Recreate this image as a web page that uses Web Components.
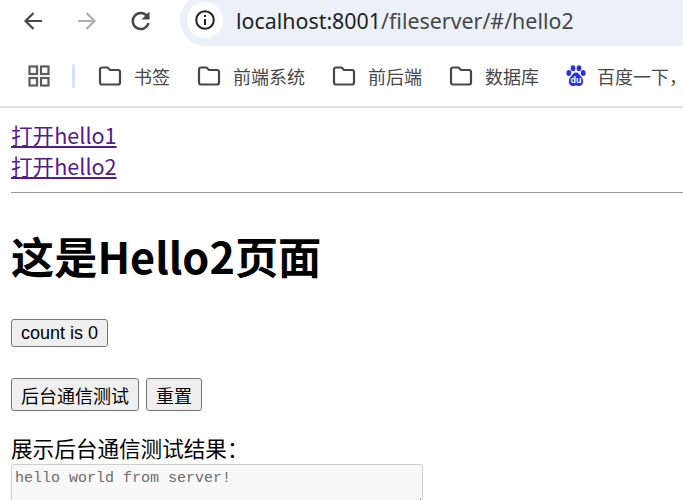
<!DOCTYPE html>
<html lang="zh">
<head>
<meta charset="utf-8">
<title>hello2</title>
<style>
  html, body { margin: 0; height: 500px; overflow: hidden; background: #fff; }
</style>
</head>
<body>
<browser-toolbar url="localhost:8001/fileserver/#/hello2"></browser-toolbar>
<bookmark-bar>
  <bookmark-item>书签</bookmark-item>
  <bookmark-item>前端系统</bookmark-item>
  <bookmark-item>前后端</bookmark-item>
  <bookmark-item>数据库</bookmark-item>
  <bookmark-item icon="baidu">百度一下，</bookmark-item>
</bookmark-bar>
<hello-page></hello-page>

<script>
const toolbarTemplate = document.createElement('template')
toolbarTemplate.innerHTML = `
  <style>
    :host {
      display: flex;
      align-items: flex-start;
      height: 46px;
      overflow: hidden;
      background: #fff;
    }
    svg { display: block; flex: none; }
    .nav {
      flex: none;
      display: flex;
      align-items: center;
      gap: 30px;
      height: 42px;
      padding-left: 21px;
      width: 180px;
      box-sizing: border-box;
    }
    .address {
      flex: 1;
      height: 52px;
      display: flex;
      align-items: center;
      margin: -6px -40px 0 0;
      padding-left: 7px;
      background: #ebf0f9;
      border-radius: 26px 0 0 26px;
    }
    .info {
      width: 36px;
      height: 36px;
      border-radius: 50%;
      background: #fff;
      display: flex;
      align-items: center;
      justify-content: center;
    }
    .url {
      margin-left: 13px;
      font: 21.400px "Noto Sans", "Liberation Sans", sans-serif;
      color: #1f1f1f;
      white-space: nowrap;
    }
    .url span { color: #474747; }
  </style>
  <div class="nav">
    <svg width="24" height="24" viewBox="0 0 24 24" fill="none" stroke="#474747" stroke-width="2.200"><path d="M21 12H4.500M12.500 4 4.500 12l8 8"/></svg>
    <svg width="24" height="24" viewBox="0 0 24 24" fill="none" stroke="#b0b0b0" stroke-width="2.200"><path d="M3 12h16.500M11.500 4l8 8-8 8"/></svg>
    <svg width="24" height="24" viewBox="0 0 24 24" fill="none" stroke="#474747" stroke-width="2.400"><path d="M19.500 14a8 8 0 1 1-1.500-7L20 9"/><path d="M20.500 2.500v8h-8" stroke="none" fill="#474747"/></svg>
  </div>
  <div class="address">
    <div class="info">
      <svg width="24" height="24" viewBox="0 0 24 24" fill="none" stroke="#1f1f1f" stroke-width="2"><circle cx="12" cy="12" r="8.800"/><path d="M12 11v6M12 7v2"/></svg>
    </div>
    <div class="url"></div>
  </div>`

class BrowserToolbar extends HTMLElement {
  constructor() {
    super()
    const shadow = this.attachShadow({ mode: 'open' })
    shadow.appendChild(toolbarTemplate.content.cloneNode(true))
    const url = this.getAttribute('url')
    const i = url.indexOf('/')
    shadow.querySelector('.url').innerHTML = url.slice(0, i) + '<span>' + url.slice(i) + '</span>'
  }
}
customElements.define('browser-toolbar', BrowserToolbar)

const barTemplate = document.createElement('template')
barTemplate.innerHTML = `
  <style>
    :host {
      display: flex;
      align-items: center;
      height: 60px;
      border-bottom: 2px solid #e1e1e1;
      overflow: hidden;
      white-space: nowrap;
      background: #fff;
    }
    svg { display: block; flex: none; margin-left: 28px; }
    .sep {
      flex: none;
      width: 3px;
      height: 24px;
      margin: 0 23px 0 22px;
      background: #d3e3fd;
      border-radius: 2px;
    }
    .items { display: flex; align-items: center; gap: 27px; }
  </style>
  <svg width="22" height="22" viewBox="0 0 22 22" fill="none" stroke="#5c5c5c" stroke-width="2.200">
    <rect x="1.500" y="1.500" width="7.500" height="7.500"/><rect x="13" y="1.500" width="7.500" height="7.500"/>
    <rect x="1.500" y="13" width="7.500" height="7.500"/><rect x="13" y="13" width="7.500" height="7.500"/>
  </svg>
  <div class="sep"></div>
  <div class="items"><slot></slot></div>`

class BookmarkBar extends HTMLElement {
  constructor() {
    super()
    this.attachShadow({ mode: 'open' }).appendChild(barTemplate.content.cloneNode(true))
  }
}
customElements.define('bookmark-bar', BookmarkBar)

const folderIcon = `<svg width="24" height="20" viewBox="0 0 24 20" fill="none" stroke="#474747" stroke-width="2.200"><path d="M2 3.500a2 2 0 0 1 2-2h5.500l2.500 2.500h8a2 2 0 0 1 2 2V16.500a2 2 0 0 1-2 2H4a2 2 0 0 1-2-2z"/></svg>`
const baiduIcon = `<svg width="20" height="22" viewBox="0 0 20 22" fill="#2932e1"><ellipse cx="2.800" cy="8" rx="2.400" ry="2.900"/><ellipse cx="7" cy="3.200" rx="2.400" ry="3"/><ellipse cx="13" cy="3.200" rx="2.400" ry="3"/><ellipse cx="17.200" cy="8" rx="2.400" ry="2.900"/><path d="M10 7.500c-3 0-3.500 2.500-5.500 4.500C2 14.500 2 21 7 21c1.300 0 2-.5 3-.5s1.700.5 3 .5c5 0 5-6.500 2.500-9-2-2-2.500-4.500-5.500-4.500z"/><text x="10" y="18" text-anchor="middle" font-family="Liberation Sans" font-size="9" font-weight="700" fill="#fff">du</text></svg>`

const itemTemplate = document.createElement('template')
itemTemplate.innerHTML = `
  <style>
    :host {
      display: flex;
      align-items: center;
      gap: 12px;
      font: 18px "Noto Sans CJK SC", sans-serif;
      color: #474747;
    }
    :host([icon="baidu"]) { gap: 11px; }
    svg { display: block; flex: none; }
  </style>
  <span id="icon"></span>
  <slot></slot>`

class BookmarkItem extends HTMLElement {
  constructor() {
    super()
    const shadow = this.attachShadow({ mode: 'open' })
    shadow.appendChild(itemTemplate.content.cloneNode(true))
    shadow.getElementById('icon').innerHTML = this.getAttribute('icon') === 'baidu' ? baiduIcon : folderIcon
  }
}
customElements.define('bookmark-item', BookmarkItem)

const pageTemplate = document.createElement('template')
pageTemplate.innerHTML = `
  <style>
    :host {
      display: block;
      height: 392px;
      overflow: hidden;
      box-sizing: border-box;
      padding: 11px 0 0 11px;
      font: 21.600px/31px "Noto Sans CJK SC", sans-serif;
      color: #000;
    }
    a { display: block; width: max-content; color: #551a8b; text-decoration: underline; }
    hr { height: 1px; margin: 11px 0 0; border: none; background: #9a9a9a; }
    h1 { margin: 25px 0 0; font-size: 43.200px; line-height: 74px; font-weight: 700; }
    .row { display: flex; gap: 7px; align-items: flex-start; }
    .count { margin-top: 27px; }
    .actions { margin-top: 31px; }
    button {
      height: 28px;
      padding: 0 9px;
      font: 18px "Liberation Sans", "Noto Sans CJK SC", sans-serif;
      color: #000;
      background: #efefef;
      border: 1px solid #767676;
      border-radius: 3px;
    }
    .actions button { height: 33px; }
    label { display: block; margin-top: 22px; height: 31px; line-height: 30px; }
    textarea {
      display: block;
      box-sizing: border-box;
      width: 412px;
      height: 44px;
      margin: 0;
      padding: 6px 3px 3px;
      font: 15px/16px "Liberation Mono", monospace;
      color: #6d6d6d;
      background: #f8f8f8;
      border: 1px solid #cfcfcf;
      border-radius: 3px;
    }
  </style>
  <a href="#/hello1">打开hello1</a>
  <a href="#/hello2">打开hello2</a>
  <hr>
  <h1>这是Hello2页面</h1>
  <div class="row count"><button>count is 0</button></div>
  <div class="row actions"><button>后台通信测试</button><button>重置</button></div>
  <label>展示后台通信测试结果：</label>
  <textarea readonly>hello world from server!</textarea>`

class HelloPage extends HTMLElement {
  constructor() {
    super()
    this.attachShadow({ mode: 'open' }).appendChild(pageTemplate.content.cloneNode(true))
  }
}
customElements.define('hello-page', HelloPage)
</script>
</body>
</html>
